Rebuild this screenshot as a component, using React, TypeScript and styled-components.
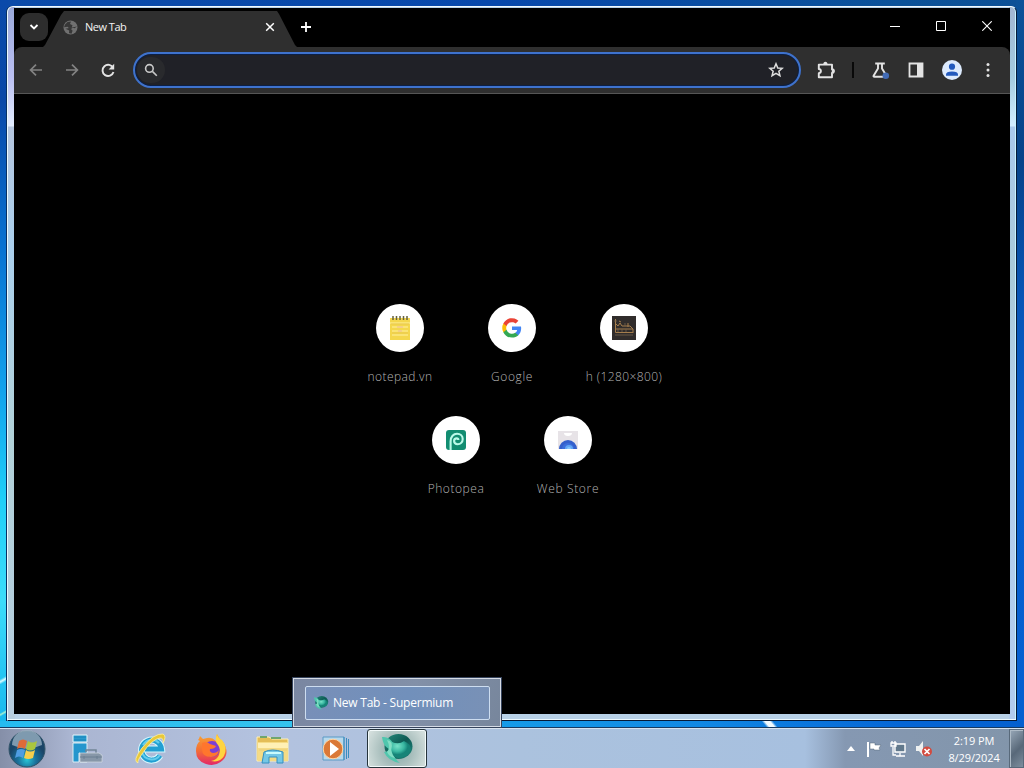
import React from 'react';
import styled, { createGlobalStyle } from 'styled-components';

const Global = createGlobalStyle`
  *, *::before, *::after { box-sizing: border-box; }
  html, body, #root { margin: 0; height: 100%; }
  body { overflow: hidden; font-family: "Noto Sans", "Open Sans", sans-serif; }
  svg { display: block; flex: none; }
  button { border: 0; padding: 0; margin: 0; background: none; color: inherit; font: inherit; }
`;

const Desktop = styled.main`
  position: relative;
  display: flex;
  flex-direction: column;
  width: 1024px;
  height: 768px;
  overflow: hidden;
  background:
    linear-gradient(150deg, transparent 40%, #d9fbff 50%, transparent 60%) 0 668px / 7px 24px no-repeat,
    linear-gradient(150deg, transparent 42%, #a5f0d0 50%, transparent 58%) 0 703px / 7px 20px no-repeat,
    linear-gradient(50deg, transparent 32%, #f2fbff 42%, #f2fbff 58%, transparent 68%) 757px 721px / 26px 7px no-repeat,
    linear-gradient(180deg, #0a4aaa 0, #0848a8 100px, #0873d2 250px, #12a2ec 390px, #20cff8 500px, #3cdcfa 600px, #18b8ee 721px) 0 0 / 8px 721px no-repeat,
    linear-gradient(180deg, #0c5299 0, #064389 160px, #0755b6 300px, #075fcf 450px, #0560d0 721px) 1016px 0 / 8px 721px no-repeat,
    linear-gradient(90deg, #0b4ba9 0, #0748ac 500px, #0b5299 900px, #0c5096 1024px) 0 0 / 100% 8px no-repeat,
    linear-gradient(90deg, #25bbf0 0, #35c3ee 290px, #169be8 500px, #1188e4 700px, #0566d6 900px, #0560cf 100%);
`;

const Window = styled.section`
  display: flex;
  flex-direction: column;
  height: 715px;
  margin: 6px 7px 7px 7px;
  padding: 1px 6px 6px 6px;
  border: 1px solid #061b38;
  border-top-color: #f1faff;
  border-left-color: #eafaff;
  border-radius: 6px 6px 0 0;
  box-shadow: inset 0 -1px #eefaff, inset -1px 0 #c9f3ff, -1px 0 #073064;
  background:
    linear-gradient(180deg, #9aa9da 0, #bbc0f2 70px, #e3edff 119px, #b5c6df 120px, #abd0ed 240px, #b2d2d9 430px, #b7cee0 100%) 0 0 / 7px 100% no-repeat,
    linear-gradient(180deg, #a3b6d1 0, #a2cbe0 70px, #d3eeff 119px, #a9c9ec 120px, #a9cad9 270px, #b3cfec 430px, #b1cbed 100%) 100% 0 / 7px 100% no-repeat,
    #b8d1e7;
`;

const Browser = styled.div`
  display: flex;
  flex: 1;
  flex-direction: column;
  width: 996px;
  background: #000;
`;

const TabStrip = styled.header`
  display: flex;
  align-items: flex-start;
  height: 39px;
  padding-left: 6px;
  color: #fff;
`;

const TabSearch = styled.button`
  display: grid;
  place-items: center;
  width: 28px;
  height: 28px;
  margin-top: 5px;
  border-radius: 9px;
  background: #2d2d2d;
`;

const Tab = styled.div`
  display: flex;
  align-items: center;
  width: 254px;
  height: 36px;
  margin: 3px 0 0 -5px;
  padding: 0 22px 4px 20px;
  background: #2f2f2f;
  clip-path: polygon(0 100%, 2px 34px, 18px 4px, 21px 0, 234px 0, 236px 3px, 252px 34px, 254px 100%);
`;

const TabTitle = styled.span`
  flex: 1;
  margin-left: 7px;
  color: #f3f3f3;
  font: 400 11px/16px "Open Sans", sans-serif;
  letter-spacing: -0.5px;
`;

const NewTab = styled.button`
  display: grid;
  place-items: center;
  width: 20px;
  height: 20px;
  margin: 9px 0 0 -1px;
`;

const WindowControls = styled.div`
  display: flex;
  margin-left: auto;
`;

const WindowButton = styled.button`
  display: grid;
  place-items: center;
  width: 46px;
  height: 36px;
`;

const Toolbar = styled.nav`
  display: flex;
  align-items: center;
  height: 47px;
  border-bottom: 1px solid #565656;
  border-radius: 8px 8px 0 0;
  background: #2f2f2f;
  color: #e0e0e0;
`;

const IconButton = styled.button<{ $dim?: boolean }>`
  display: grid;
  flex: none;
  place-items: center;
  width: 36px;
  height: 36px;
  color: ${({ $dim }) => ($dim ? '#838383' : '#e4e4e4')};
`;

const Navigation = styled.div`
  display: flex;
  flex: none;
  width: 119px;
  padding-left: 4px;
`;

const Omnibox = styled.div`
  display: flex;
  flex: none;
  align-items: center;
  justify-content: space-between;
  width: 668px;
  height: 36px;
  margin-right: 7px;
  padding: 0 15px 0 2px;
  border: 2px solid #3e72cd;
  border-radius: 18px;
  background: #202127;
  box-shadow: inset 0 0 0 1px #0b1f45;
`;

const SearchBadge = styled.span`
  display: grid;
  place-items: center;
  width: 28px;
  height: 26px;
  border-radius: 13px;
  background: #292a2d;
  color: #c8c8c8;
`;

const Divider = styled.span`
  width: 2px;
  height: 16px;
  margin: 0 8px;
  background: #090909;
`;

const NewTabPage = styled.div`
  flex: 1;
  padding-top: 194px;
  background: #000;
`;

const ShortcutRow = styled.div`
  display: flex;
  justify-content: center;
  height: 112px;
`;

const Shortcut = styled.a`
  display: flex;
  flex-direction: column;
  align-items: center;
  width: 112px;
  padding-top: 16px;
`;

const ShortcutIcon = styled.span`
  display: grid;
  place-items: center;
  width: 48px;
  height: 48px;
  border-radius: 50%;
  background: #fff;
`;

const ShortcutLabel = styled.span<{ $spacing: number }>`
  margin-top: 16px;
  color: #b4b4b4;
  font: 300 12px/18px "Open Sans", sans-serif;
  letter-spacing: ${({ $spacing }) => $spacing}px;
  white-space: nowrap;
`;

const Taskbar = styled.footer`
  display: flex;
  height: 40px;
  border-top: 1px solid #d7e3f0;
  background:
    linear-gradient(90deg, #858fa8 0, #aab5d1 70px, #b3c2df 260px, #abc2de 520px, #a7c0df 805px, #8598b2 845px, #8295aa 100%);
  box-shadow: 0 -1px #153a63;
`;

const Launcher = styled.button<{ $width: number; $active?: boolean }>`
  display: grid;
  place-items: center;
  width: ${({ $width }) => $width}px;
  height: 39px;
  border: ${({ $active }) => ($active ? '1px solid #26343b' : '0')};
  border-radius: ${({ $active }) => ($active ? '3px' : '0')};
  background: ${({ $active }) => ($active ? 'radial-gradient(circle at 50% 55%, #85aaa9 0, #a9bfbd 45%, #dce5e3 100%)' : 'none')};
  box-shadow: ${({ $active }) => ($active ? 'inset 0 0 0 1px #f3fafa' : 'none')};
`;

const Tray = styled.div`
  display: flex;
  align-items: center;
  gap: 8px;
  margin-left: auto;
  color: #fff;
`;

const TrayArrow = styled.svg`
  margin-right: 3px;
`;

const Clock = styled.time`
  width: 66px;
  color: #fff;
  font: 400 11px/17px "Open Sans", sans-serif;
  letter-spacing: -0.1px;
  text-align: center;
`;

const ShowDesktop = styled.button`
  width: 15px;
  height: 39px;
  margin-left: -6px;
  border: 1px solid #58697a;
  background: linear-gradient(135deg, #98a8b8, #586879 55%, #7e8e9e);
  box-shadow: inset 1px 1px #adbac6;
`;

const Preview = styled.aside`
  position: absolute;
  top: 677px;
  left: 292px;
  width: 210px;
  height: 51px;
  padding: 8px 11px 7px 12px;
  border: 1px solid #35435c;
  background: linear-gradient(110deg, #7986a1, #8290a8 55%, #77869c);
  box-shadow: inset 0 0 0 1px #d5dbe5;
`;

const PreviewItem = styled.div`
  display: flex;
  align-items: center;
  gap: 4px;
  height: 34px;
  padding-left: 7px;
  border: 1px solid #cdddf0;
  border-radius: 2px;
  background: linear-gradient(100deg, #788fb8, #7190bb 55%, #7991b6);
  color: #fff;
  font: 400 12px/18px "Open Sans", sans-serif;
  letter-spacing: -0.23px;
  white-space: nowrap;
`;

const Globe = () => (
  <svg width="15" height="15" viewBox="0 0 15 15">
    <circle cx="7.5" cy="7.5" r="7" fill="#707070" />
    <path d="M2 4.5 4.5 2 8 1.5 7 4 9.5 5.2 8.7 7.5 5.8 8 4.5 6.8 1 7.2M14 6.5 11.5 8.2 9.8 7.8 8 9 9.6 10.7 8.5 13.8 6 13 6.2 10.6 2.5 8.8" fill="#373737" />
  </svg>
);

const Arrow = ({ right = false }: { right?: boolean }) => (
  <svg width="16" height="16" viewBox="0 0 16 16" fill="none" stroke="currentColor" strokeWidth="1.7">
    {right ? <path d="M2 8h11M8 2.6 13.4 8 8 13.4" /> : <path d="M14 8H3M8 2.6 2.6 8 8 13.4" />}
  </svg>
);

const Reload = () => (
  <svg width="18" height="18" viewBox="0 0 18 18">
    <path d="M14.2 7A5.6 5.6 0 1 0 14.5 11" fill="none" stroke="currentColor" strokeWidth="1.9" />
    <path d="M15.2 2.8v5.7H9.6z" fill="currentColor" />
  </svg>
);

const Search = () => (
  <svg width="14" height="14" viewBox="0 0 14 14" fill="none" stroke="currentColor" strokeWidth="1.6">
    <circle cx="5.4" cy="5.4" r="3.8" /><path d="m8.4 8.4 4.4 4.4" />
  </svg>
);

const Star = () => (
  <svg width="16" height="16" viewBox="0 0 18 18" fill="none" stroke="#dedede" strokeWidth="1.7">
    <path d="m9 2 2 4.7 5 .4-3.8 3.3 1.2 5L9 12.7l-4.4 2.7 1.2-5L2 7.1l5-.4z" />
  </svg>
);

const Puzzle = () => (
  <svg width="20" height="20" viewBox="0 0 20 20">
    <path d="M2.8 4.6H16v4.6q1.8 0 1.8 1.9T16 13v4.2H2.8v-4q2.1-.2 2.1-2.1T2.8 9z" fill="none" stroke="currentColor" strokeWidth="1.9" strokeLinejoin="round" />
    <path d="M7.3 4.5q0-2.8 2.1-2.8t2.1 2.8zM15.8 9q2.8 0 2.8 2.1t-2.8 2.1z" fill="currentColor" />
  </svg>
);

const Flask = () => (
  <svg width="20" height="20" viewBox="0 0 20 20">
    <path d="M5.2 3.5h9.6M8 3.5v5l-4.4 7.2q-.5 1.1.8 1.1h11.2q1.3 0 .8-1.1L12 8.5v-5" fill="none" stroke="currentColor" strokeWidth="1.9" />
    <circle cx="15.8" cy="15.7" r="3.3" fill="#426bb5" />
  </svg>
);

const SidePanel = () => (
  <svg width="16" height="16" viewBox="0 0 16 16">
    <path d="M1.5 1.5h13v13h-13z" fill="none" stroke="currentColor" strokeWidth="1.8" /><path d="M9 1h6v14H9z" fill="currentColor" />
  </svg>
);

const Profile = () => (
  <svg width="20" height="20" viewBox="0 0 20 20">
    <circle cx="10" cy="10" r="10" fill="#dceafd" /><circle cx="10" cy="6.7" r="3.1" fill="#2259bd" />
    <path d="M4 15.8v-1.2q0-3.1 6-3.1t6 3.1v1.2z" fill="#2259bd" />
  </svg>
);

const Notepad = () => (
  <svg width="24" height="26" viewBox="0 0 24 26">
    <path d="M2 3h20v22H2z" fill="#f4d74d" /><path d="M2 8h20M4 12h16M4 16h16M4 20h16" stroke="#fff0a0" />
    <path d="M3 9h18M4 18h16" stroke="#e9c950" /><path d="M9 11h6v2H9zm1 4h4v2h-4z" fill="#f4cf86" />
    <path d="M5 1v4m3.5-4v4M12 1v4m3.5-4v4M19 1v4" stroke="#66613b" strokeWidth="1.5" />
  </svg>
);

const Google = () => (
  <svg width="20" height="20" viewBox="0 0 24 24">
    <path fill="#4285f4" d="M23 12.3c0-.8-.1-1.5-.2-2.2H12v4.2h6.2a5.3 5.3 0 0 1-2.3 3.5v2.9h3.7c2.2-2 3.4-4.9 3.4-8.4z" />
    <path fill="#34a853" d="M12 23.5c3.1 0 5.7-1 7.6-2.8l-3.7-2.9a7 7 0 0 1-10.5-3.7H1.6V17A11.5 11.5 0 0 0 12 23.5z" />
    <path fill="#fbbc05" d="M5.4 14.1a6.9 6.9 0 0 1 0-4.4v-3H1.6a11.5 11.5 0 0 0 0 10.4z" />
    <path fill="#ea4335" d="M12 5c1.7 0 3.2.6 4.4 1.7l3.3-3.3A11.3 11.3 0 0 0 1.6 6.7l3.8 3A6.9 6.9 0 0 1 12 5z" />
  </svg>
);

const ShipPicture = () => (
  <svg width="24" height="24" viewBox="0 0 24 24">
    <path fill="#302c2b" d="M0 0h24v24H0z" />
    <path d="M3.5 3v13.5H21M3 7l3 3 2-3 2 3h8l3 3M4 13h17v4M7 5l2 1M16 7v4" fill="none" stroke="#a47d4c" strokeWidth="1" />
    <path d="M2 5h3m8 2v3M6 13v3m4-3v3m4-3v3M3 19h18" stroke="#75624c" strokeWidth=".8" />
  </svg>
);

const Photopea = () => (
  <svg width="20" height="20" viewBox="0 0 20 20">
    <rect width="20" height="20" rx="3" fill="#128d71" />
    <path d="M4.6 20v-8.5C4.6 6.5 7.6 3.8 11 3.8c3.5 0 5.7 2.2 5.7 5.2 0 3.2-2.3 5.2-5 5.2-2.2 0-3.6-1.3-3.6-3.1 0-1.7 1.2-2.7 2.6-2.7 1.1 0 1.7.7 1.7 1.5" fill="none" stroke="#bafae8" strokeWidth="2.1" />
  </svg>
);

const WebStore = () => (
  <svg width="22" height="22" viewBox="0 0 22 22">
    <path d="M1 2h20v18H1z" fill="#e7e3e7" /><path d="M7 4h8q0 3-4 3T7 4" fill="#fff" />
    <path d="M2 20a9 9 0 0 1 18 0" fill="#3460cc" /><path d="M5 20a6 6 0 0 1 12 0" fill="#3c6fdc" />
    <path d="M8 20a4 4 0 0 1 8 0" fill="#62a7f5" /><path d="M10 20a2 2 0 0 1 4 0" fill="#86c4fb" />
  </svg>
);

const Windows = () => (
  <svg width="38" height="38" viewBox="0 0 38 38">
    <defs>
      <radialGradient id="start" cy="80%"><stop stopColor="#28c5d5" /><stop offset=".5" stopColor="#1a719b" /><stop offset="1" stopColor="#1a4567" /></radialGradient>
    </defs>
    <circle cx="19" cy="19" r="18" fill="url(#start)" stroke="#315367" />
    <path d="M4 15a15 15 0 0 1 30 0q-15 7-30 0" fill="#b4c8d5" opacity=".65" />
    <path d="M11 11q4-3 8 0l-2 8q-4-3-8 0z" fill="#de6b39" /><path d="M20 11q4 3 9 0l-2 8q-5 3-9 0z" fill="#a9c63e" />
    <path d="M9 20q4-2 8 0l-2 8q-4-3-8 0z" fill="#4f9de2" /><path d="M18 20q4 3 9 0l-2 8q-5 2-9 0z" fill="#f7cf4c" />
  </svg>
);

const ServerManager = () => (
  <svg width="32" height="30" viewBox="-1 0 32 30">
    <path d="M1 1h14v7H1z" fill="#2b9acb" stroke="#e2f4fa" /><path d="M1 9h14v19H8V19H7v9H1z" fill="#2596cd" stroke="#dceff5" />
    <path d="M2 3h12M2 6h12" stroke="#1784bd" /><path d="M14 18v-2h10v3" stroke="#718597" strokeWidth="1.5" fill="none" />
    <path d="M8 19h19l3 2v7H8z" fill="#8797a8" stroke="#d3dbe2" strokeWidth=".7" /><path d="M8 23h22M12 22v3m13-3v3" stroke="#6b7f91" />
  </svg>
);

const Explorer = () => (
  <svg width="34" height="34" viewBox="0 0 34 34">
    <path d="M27 23.5a10 10 0 1 1 1.5-6.5H12" fill="none" stroke="#d5f6fc" strokeWidth="7" />
    <path d="M27 23.5a10 10 0 1 1 1.5-6.5H12" fill="none" stroke="#229fd2" strokeWidth="5" />
    <path d="M27 23a10 10 0 0 1-18-3M10 13a10 10 0 0 1 16-2" fill="none" stroke="#63cdec" strokeWidth="2" />
    <path d="M5 31Q-1 29 9 16 21 1 30 2q4 2 0 9 1-5-3-5Q19 7 9 22q-5 7-4 9z" fill="#e8c839" stroke="#fff0a0" strokeWidth=".8" />
  </svg>
);

const Firefox = () => (
  <svg width="34" height="34" viewBox="0 0 34 34">
    <defs><linearGradient id="fire" x2="0" y2="1"><stop stopColor="#f8a633" /><stop offset=".55" stopColor="#f36c35" /><stop offset="1" stopColor="#e32868" /></linearGradient></defs>
    <path d="M4 8q1-1 2-4l3 3 4-1q5-1 9 3 0-5 1-7 2 5 6 8 7 11 0 18-7 7-17 4Q2 29 2 19q0-7 4-10z" fill="url(#fire)" />
    <circle cx="18" cy="17" r="8" fill="#7c3fd4" /><path d="M8 11q5-2 8 1l6 2q-1 3-6 3-1 3 3 4 4 0 6-3-1 7-8 7-9 0-9-8" fill="#ff762d" />
    <path d="M23 2q-3 7 1 11 3 4 1 10-2 5-8 6 9 2 13-5 4-9-2-16-4-2-5-6z" fill="#ffd43f" />
  </svg>
);

const Folder = () => (
  <svg width="34" height="32" viewBox="0 0 34 32">
    <path d="M1 4h12l3 2h16v22H1z" fill="#e4bd56" stroke="#fff2b4" /><path d="M4 4h7M15 5h10" stroke="#70a66e" strokeWidth="2" />
    <path d="M2 9h30v19H2z" fill="#f5db85" /><path d="M2 10h30v5H2z" fill="#fff0b5" /><path d="M3 17h28" stroke="#e9cf78" />
    <path d="M8 19q8-4 19 0v11h-6v-6h-8v6H6z" fill="#74c7e6" stroke="#348fc0" /><path d="M10 20h15" stroke="#cafbfd" strokeWidth="2" />
  </svg>
);

const MediaPlayer = () => (
  <svg width="30" height="28" viewBox="1 0 30 28">
    <path d="M3 2h21v23H3z" fill="#b7d9ec" stroke="#5a9ac5" /><path d="M24 2v23m2.5-22v21m2-20v19" stroke="#398dbf" />
    <circle cx="13" cy="14" r="9.8" fill="#da7937" stroke="#ffd5a3" /><path d="m10 7 9 7-9 7z" fill="#fff" />
  </svg>
);

const Supermium = ({ small = false }: { small?: boolean }) => (
  <svg width={small ? 16 : 34} height={small ? 16 : 34} viewBox="0 0 34 34">
    <defs>
      <linearGradient id="tealDark" x2="1" y2="1"><stop stopColor="#278d7d" /><stop offset=".5" stopColor="#0d5953" /><stop offset="1" stopColor="#218b80" /></linearGradient>
      <radialGradient id="tealBall" cx="35%" cy="30%"><stop stopColor="#79e2c9" /><stop offset=".65" stopColor="#39b7a1" /><stop offset="1" stopColor="#168478" /></radialGradient>
    </defs>
    <ellipse cx="18.5" cy="14.5" rx="14" ry="12.5" fill="url(#tealDark)" />
    <path d="M12 10q7 3 12-1 7 3 7 9-4 8-13 8-8-2-8-12z" fill="url(#tealBall)" />
    <path d="M2 5q7-1 11 6-4 9 3 16 1 2 4 4Q8 29 4 20q4 0 5-3-6-3-7-12z" fill="#50c6ad" />
    <path d="M7 8q7 1 4 10 1 5 4 8-6-1-8-6 4-4 0-12z" fill="#82ddc4" />
  </svg>
);

const Flag = () => (
  <svg width="16" height="18" viewBox="0 0 16 18"><path d="M2 2v15" stroke="#fff" strokeWidth="2" /><path d="M4 3h5v2h6l-2 3 1 2H8V9H4z" fill="#fff" stroke="#56697a" strokeWidth=".5" /></svg>
);
const Network = () => (
  <svg width="17" height="18" viewBox="0 0 17 18"><path d="M5 4h10v8H5z" fill="#61788c" stroke="#fff" strokeWidth="1.4" /><path d="M10 13v3m-4 0h9M3 7v8h3M1 3h5v3H1zM2 1v2m3-2v2" fill="none" stroke="#fff" strokeWidth="1.3" /></svg>
);
const Muted = () => (
  <svg width="18" height="18" viewBox="0 0 18 18"><path d="M1 6h3l4-5v15l-4-5H1z" fill="#edf0f0" /><circle cx="12" cy="11.5" r="5" fill="#d34b3f" /><path d="m9.5 9 5 5m0-5-5 5" stroke="#fff" strokeWidth="1.7" /></svg>
);

export default function App() {
  return (
    <>
      <Global />
      <Desktop>
        <Window>
          <Browser>
            <TabStrip>
              <TabSearch aria-label="Search tabs"><svg width="10" height="8" viewBox="0 0 10 8" fill="none" stroke="#fff" strokeWidth="1.8"><path d="m1.5 2 3.5 3.5L8.5 2" /></svg></TabSearch>
              <Tab>
                <Globe />
                <TabTitle>New Tab</TabTitle>
                <svg width="10" height="10" viewBox="0 0 10 10" stroke="#fff" strokeWidth="1.5"><path d="m1.2 1.2 7.6 7.6m0-7.6L1.2 8.8" /></svg>
              </Tab>
              <NewTab aria-label="New tab"><svg width="12" height="12" viewBox="0 0 12 12" stroke="#fff" strokeWidth="1.8"><path d="M1 6h10M6 1v10" /></svg></NewTab>
              <WindowControls>
                <WindowButton aria-label="Minimize"><svg width="10" height="10" viewBox="0 0 10 10" stroke="#fff"><path d="M0 5.5h10" /></svg></WindowButton>
                <WindowButton aria-label="Maximize"><svg width="10" height="10" viewBox="0 0 10 10" fill="none" stroke="#fff"><path d="M.5.5h9v9h-9z" /></svg></WindowButton>
                <WindowButton aria-label="Close"><svg width="10" height="10" viewBox="0 0 10 10" stroke="#fff" strokeWidth="1.1"><path d="m.3.3 9.4 9.4m0-9.4L.3 9.7" /></svg></WindowButton>
              </WindowControls>
            </TabStrip>
            <Toolbar>
              <Navigation>
                <IconButton $dim aria-label="Back"><Arrow /></IconButton>
                <IconButton $dim aria-label="Forward"><Arrow right /></IconButton>
                <IconButton aria-label="Reload"><Reload /></IconButton>
              </Navigation>
              <Omnibox><SearchBadge><Search /></SearchBadge><Star /></Omnibox>
              <IconButton aria-label="Extensions"><Puzzle /></IconButton>
              <Divider />
              <IconButton aria-label="Labs"><Flask /></IconButton>
              <IconButton aria-label="Side panel"><SidePanel /></IconButton>
              <IconButton aria-label="Profile"><Profile /></IconButton>
              <IconButton aria-label="Menu"><svg width="4" height="16" viewBox="0 0 4 16" fill="currentColor"><circle cx="2" cy="2.5" r="1.5" /><circle cx="2" cy="8" r="1.5" /><circle cx="2" cy="13.5" r="1.5" /></svg></IconButton>
            </Toolbar>
            <NewTabPage>
              <ShortcutRow>
                <Shortcut><ShortcutIcon><Notepad /></ShortcutIcon><ShortcutLabel $spacing={0.42}>notepad.vn</ShortcutLabel></Shortcut>
                <Shortcut><ShortcutIcon><Google /></ShortcutIcon><ShortcutLabel $spacing={0.6}>Google</ShortcutLabel></Shortcut>
                <Shortcut><ShortcutIcon><ShipPicture /></ShortcutIcon><ShortcutLabel $spacing={0.42}>h (1280×800)</ShortcutLabel></Shortcut>
              </ShortcutRow>
              <ShortcutRow>
                <Shortcut><ShortcutIcon><Photopea /></ShortcutIcon><ShortcutLabel $spacing={0.55}>Photopea</ShortcutLabel></Shortcut>
                <Shortcut><ShortcutIcon><WebStore /></ShortcutIcon><ShortcutLabel $spacing={0.65}>Web Store</ShortcutLabel></Shortcut>
              </ShortcutRow>
            </NewTabPage>
          </Browser>
        </Window>
        <Taskbar>
          <Launcher $width={54} aria-label="Start"><Windows /></Launcher>
          <Launcher $width={66} aria-label="Server Manager"><ServerManager /></Launcher>
          <Launcher $width={59} aria-label="Internet Explorer"><Explorer /></Launcher>
          <Launcher $width={63} aria-label="Firefox"><Firefox /></Launcher>
          <Launcher $width={62} aria-label="Files"><Folder /></Launcher>
          <Launcher $width={63} aria-label="Media Player"><MediaPlayer /></Launcher>
          <Launcher $width={60} $active aria-label="Supermium"><Supermium /></Launcher>
          <Tray>
            <TrayArrow width="8" height="5" viewBox="0 0 8 5" fill="#fff"><path d="M4 0 8 5H0z" /></TrayArrow>
            <Flag /><Network /><Muted />
            <Clock>2:19 PM<br />8/29/2024</Clock>
            <ShowDesktop aria-label="Show desktop" />
          </Tray>
        </Taskbar>
        <Preview><PreviewItem><Supermium small />New Tab - Supermium</PreviewItem></Preview>
      </Desktop>
    </>
  );
}
